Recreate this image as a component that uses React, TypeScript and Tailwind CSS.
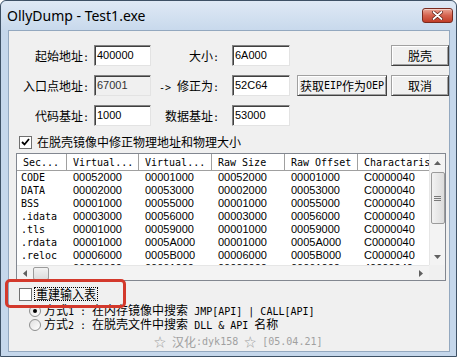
import React from 'react';

const cjk = "font-['Noto_Sans_CJK_SC',sans-serif]";
const mono = "font-['DejaVu_Sans_Mono',monospace]";
const sans = "font-['Liberation_Sans',sans-serif]";

// ascii runs get the narrow mono face, like SimSun's half-width latin
const Mixed: React.FC<{ text: string }> = ({ text }) => (
  <>
    {text
      .split(/([\x20-\x7e]+)/)
      .filter(Boolean)
      .map((s, i) =>
        /^[\x20-\x7e]+$/.test(s) ? (
          <span key={i} className={`${mono} text-[10px] whitespace-pre`}>
            {s}
          </span>
        ) : (
          <span key={i}>{s}</span>
        ),
      )}
  </>
);

const Field: React.FC<{ value: string; w: string; disabled?: boolean; className?: string }> = ({
  value,
  w,
  disabled,
  className = '',
}) => (
  <div
    className={`h-[21px] ${w} ${className} flex items-center pl-[2px] border border-[#828282] border-r-[#e3e3e3] border-b-[#e3e3e3] shadow-[inset_1px_1px_0_#404040] ${
      disabled ? 'bg-[#f0f0f0] text-[#333]' : 'bg-white text-black'
    } ${sans} text-[11px]`}
  >
    {value}
  </div>
);

const Btn: React.FC<{ w: string; className?: string; children: React.ReactNode }> = ({
  w,
  className = '',
  children,
}) => (
  <div
    className={`h-[21px] ${w} ${className} flex items-center justify-center bg-[#f0f0f0] border border-[#a0a0a0] border-r-[#404040] border-b-[#404040] shadow-[inset_1px_1px_0_#ffffff,inset_-1px_-1px_0_#a0a0a0] text-[12px] text-black ${cjk}`}
  >
    {children}
  </div>
);

const cols = [50, 72, 73, 73, 73, 80];
const headers = ['Sec...', 'Virtual...', 'Virtual...', 'Raw Size', 'Raw Offset', 'Charactaris'];
const rows = [
  ['CODE', '00052000', '00001000', '00052000', '00001000', 'C0000040'],
  ['DATA', '00002000', '00053000', '00002000', '00053000', 'C0000040'],
  ['BSS', '00001000', '00055000', '00001000', '00055000', 'C0000040'],
  ['.idata', '00003000', '00056000', '00003000', '00056000', 'C0000040'],
  ['.tls', '00001000', '00059000', '00001000', '00059000', 'C0000040'],
  ['.rdata', '00001000', '0005A000', '00001000', '0005A000', 'C0000040'],
  ['.reloc', '00006000', '0005B000', '00006000', '0005B000', 'C0000040'],
  ['.rsrc', '00008000', '00061000', '00008000', '00061000', '40000040'],
];

const ListView = () => (
  <div className="ml-[7px] mt-[4px] w-[430px] h-[128px] border border-[#828790] bg-white grid grid-cols-[412px_16px] grid-rows-[111px_15px]">
    <div className="overflow-hidden">
      <div className="flex h-[17px] border-b border-[#a0a0a0] bg-white">
        {headers.map((h, i) => (
          <div
            key={i}
            style={{ width: cols[i] }}
            className={`shrink-0 pl-[6px] flex items-center border-r border-[#a0a0a0] shadow-[inset_1px_0_0_#fff] ${mono} text-[10px] text-black whitespace-pre`}
          >
            {h}
          </div>
        ))}
      </div>
      {rows.map((r, ri) => (
        <div key={ri} className="flex h-[13px] items-center">
          {r.map((c, ci) => (
            <div
              key={ci}
              style={{ width: cols[ci] }}
              className={`shrink-0 ${ci === 0 ? `pl-[4px] ${mono} text-[10px]` : `pl-[6px] ${sans} text-[11px]`} text-black leading-[13px] whitespace-pre`}
            >
              {c}
            </div>
          ))}
        </div>
      ))}
    </div>
    {/* vertical scrollbar */}
    <div className="bg-[#f3f3f3] border-l border-[#e6e6e6] flex flex-col items-center">
      <div className="h-[17px] w-full flex items-center justify-center">
        <svg width="7" height="4" viewBox="0 0 7 4">
          <path d="M0 4 L3.5 0 L7 4 Z" fill="#606060" />
        </svg>
      </div>
      <div className="mt-[1px] w-[14px] h-[52px] rounded-[2px] border border-[#9b9b9b] bg-gradient-to-r from-[#f2f2f2] to-[#dcdcdc] flex items-center justify-center">
        <svg width="7" height="5" viewBox="0 0 7 5">
          <path d="M0 0.5 H7 M0 2.5 H7 M0 4.5 H7" stroke="#7a7a7a" strokeWidth="1" />
        </svg>
      </div>
      <div className="flex-1" />
      <div className="h-[17px] w-full flex items-center justify-center">
        <svg width="7" height="4" viewBox="0 0 7 4">
          <path d="M0 0 L3.5 4 L7 0 Z" fill="#606060" />
        </svg>
      </div>
    </div>
    {/* horizontal scrollbar */}
    <div className="bg-[#f3f3f3] border-t border-[#e6e6e6] flex items-center">
      <div className="w-[16px] h-full flex items-center justify-center">
        <svg width="4" height="7" viewBox="0 0 4 7">
          <path d="M4 0 L0 3.5 L4 7 Z" fill="#606060" />
        </svg>
      </div>
      <div className="w-[16px] h-[13px] rounded-[2px] border border-[#9b9b9b] bg-gradient-to-b from-[#f2f2f2] to-[#dcdcdc]" />
      <div className="flex-1" />
      <div className="w-[16px] h-full flex items-center justify-center">
        <svg width="4" height="7" viewBox="0 0 4 7">
          <path d="M0 0 L4 3.5 L0 7 Z" fill="#606060" />
        </svg>
      </div>
    </div>
    <div className="bg-[#f0f0f0]" />
  </div>
);

const Radio: React.FC<{ checked?: boolean }> = ({ checked }) => (
  <div className="w-[12px] h-[12px] rounded-full border border-[#8e8f8f] bg-gradient-to-br from-[#e0e0e0] to-white flex items-center justify-center">
    {checked && <div className="w-[4px] h-[4px] rounded-full bg-black" />}
  </div>
);

export default function App() {
  return (
    <div className="w-[459px] h-[358px] bg-white overflow-hidden">
      <div className="relative w-[457px] h-[357px] rounded-t-[6px] border border-[#3e5165] bg-[#c5d7eb] flex flex-col">
        {/* title bar */}
        <div className="h-[29px] shrink-0 flex items-center justify-between pl-[6px] pr-[3px] rounded-t-[6px] bg-gradient-to-b from-[#dfe9f5] to-[#c8d9ec]">
          <span className="font-['Noto_Sans',sans-serif] text-[14px] text-black">OllyDump - Test1.exe</span>
          <div className="w-[31px] h-[15px] rounded-[3px] border border-[#7a2a1e] bg-gradient-to-b from-[#e9a596] via-[#d5634f] to-[#c13c26] flex items-center justify-center shadow-[inset_0_1px_0_rgba(255,255,255,0.5)]">
            <svg width="11" height="9" viewBox="0 0 11 9">
              <path d="M1.5 1 L9.5 8 M9.5 1 L1.5 8" stroke="#5a1a10" strokeWidth="3.2" strokeLinecap="round" />
              <path d="M1.5 1 L9.5 8 M9.5 1 L1.5 8" stroke="#ffffff" strokeWidth="1.8" strokeLinecap="round" />
            </svg>
          </div>
        </div>

        {/* client area */}
        <div className={`ml-[7px] w-[442px] h-[322px] bg-[#f0f0f0] border border-[#93a8bf] text-[12px] text-black ${cjk} relative`}>
          <div className="pt-[14px] flex flex-col gap-[9px]">
            <div className="flex h-[21px] items-center">
              <div className="w-[80px] text-right">
                <Mixed text="起始地址:" />
              </div>
              <Field className="ml-[5px]" w="w-[57px]" value="400000" />
              <div className="w-[68px] text-right">
                <Mixed text="大小:" />
              </div>
              <Field className="ml-[13px]" w="w-[58px]" value="6A000" />
              <div className="ml-[7px] w-[90px]" />
              <Btn className="ml-[4px]" w="w-[58px]">
                脱壳
              </Btn>
            </div>
            <div className="flex h-[21px] items-center">
              <div className="w-[80px] text-right">
                <Mixed text="入口点地址:" />
              </div>
              <Field className="ml-[5px]" w="w-[57px]" value="67001" disabled />
              <div className="w-[68px] text-right">
                <Mixed text="-> 修正为:" />
              </div>
              <Field className="ml-[13px]" w="w-[58px]" value="52C64" />
              <Btn className="ml-[7px]" w="w-[90px]">
                <Mixed text="获取EIP作为OEP" />
              </Btn>
              <Btn className="ml-[4px]" w="w-[58px]">
                取消
              </Btn>
            </div>
            <div className="flex h-[21px] items-center">
              <div className="w-[80px] text-right">
                <Mixed text="代码基址:" />
              </div>
              <Field className="ml-[5px]" w="w-[57px]" value="1000" />
              <div className="w-[68px] text-right">
                <Mixed text="数据基址:" />
              </div>
              <Field className="ml-[13px]" w="w-[58px]" value="53000" />
            </div>
          </div>

          <div className="mt-[9px] flex h-[14px] items-center pl-[10px] leading-[14px]">
            <div className="w-[13px] h-[13px] border border-[#707070] bg-white flex items-center justify-center">
              <svg width="9" height="8" viewBox="0 0 9 8">
                <path d="M1 4 L3.5 6.5 L8 1" stroke="#000" strokeWidth="1.8" fill="none" />
              </svg>
            </div>
            <span className="ml-[5px]">在脱壳镜像中修正物理地址和物理大小</span>
          </div>

          <ListView />

          <div className="mt-[6px] flex h-[14px] items-center pl-[10px]">
            <div className="w-[13px] h-[13px] border border-[#707070] bg-white" />
            <span className="ml-[3px] px-[1px] outline outline-1 outline-dotted outline-black leading-[12px]">重建输入表</span>
          </div>
          <div className="mt-[3px] flex h-[14px] items-center pl-[20px] leading-[14px]">
            <Radio checked />
            <span className="ml-[3px]">
              <Mixed text="方式1 : 在内存镜像中搜索 JMP[API] | CALL[API]" />
            </span>
          </div>
          <div className="flex h-[14px] items-center pl-[20px] leading-[14px]">
            <Radio />
            <span className="ml-[3px]">
              <Mixed text="方式2 : 在脱壳文件中搜索 DLL & API 名称" />
            </span>
          </div>
          <div className="mt-[3px] flex h-[14px] items-center pl-[145px] text-[#a0a0a0] leading-[14px]">
            <Mixed text="☆" />
            <Mixed text=" 汉化:dyk158 " />
            <Mixed text="☆" />
            <Mixed text=" [05.04.21]" />
          </div>

          {/* red annotation box */}
          <div className="absolute left-[-4px] top-[248px] w-[121px] h-[29px] rounded-[5px] border-[3px] border-[#d3392c]" />
        </div>
      </div>
    </div>
  );
}
